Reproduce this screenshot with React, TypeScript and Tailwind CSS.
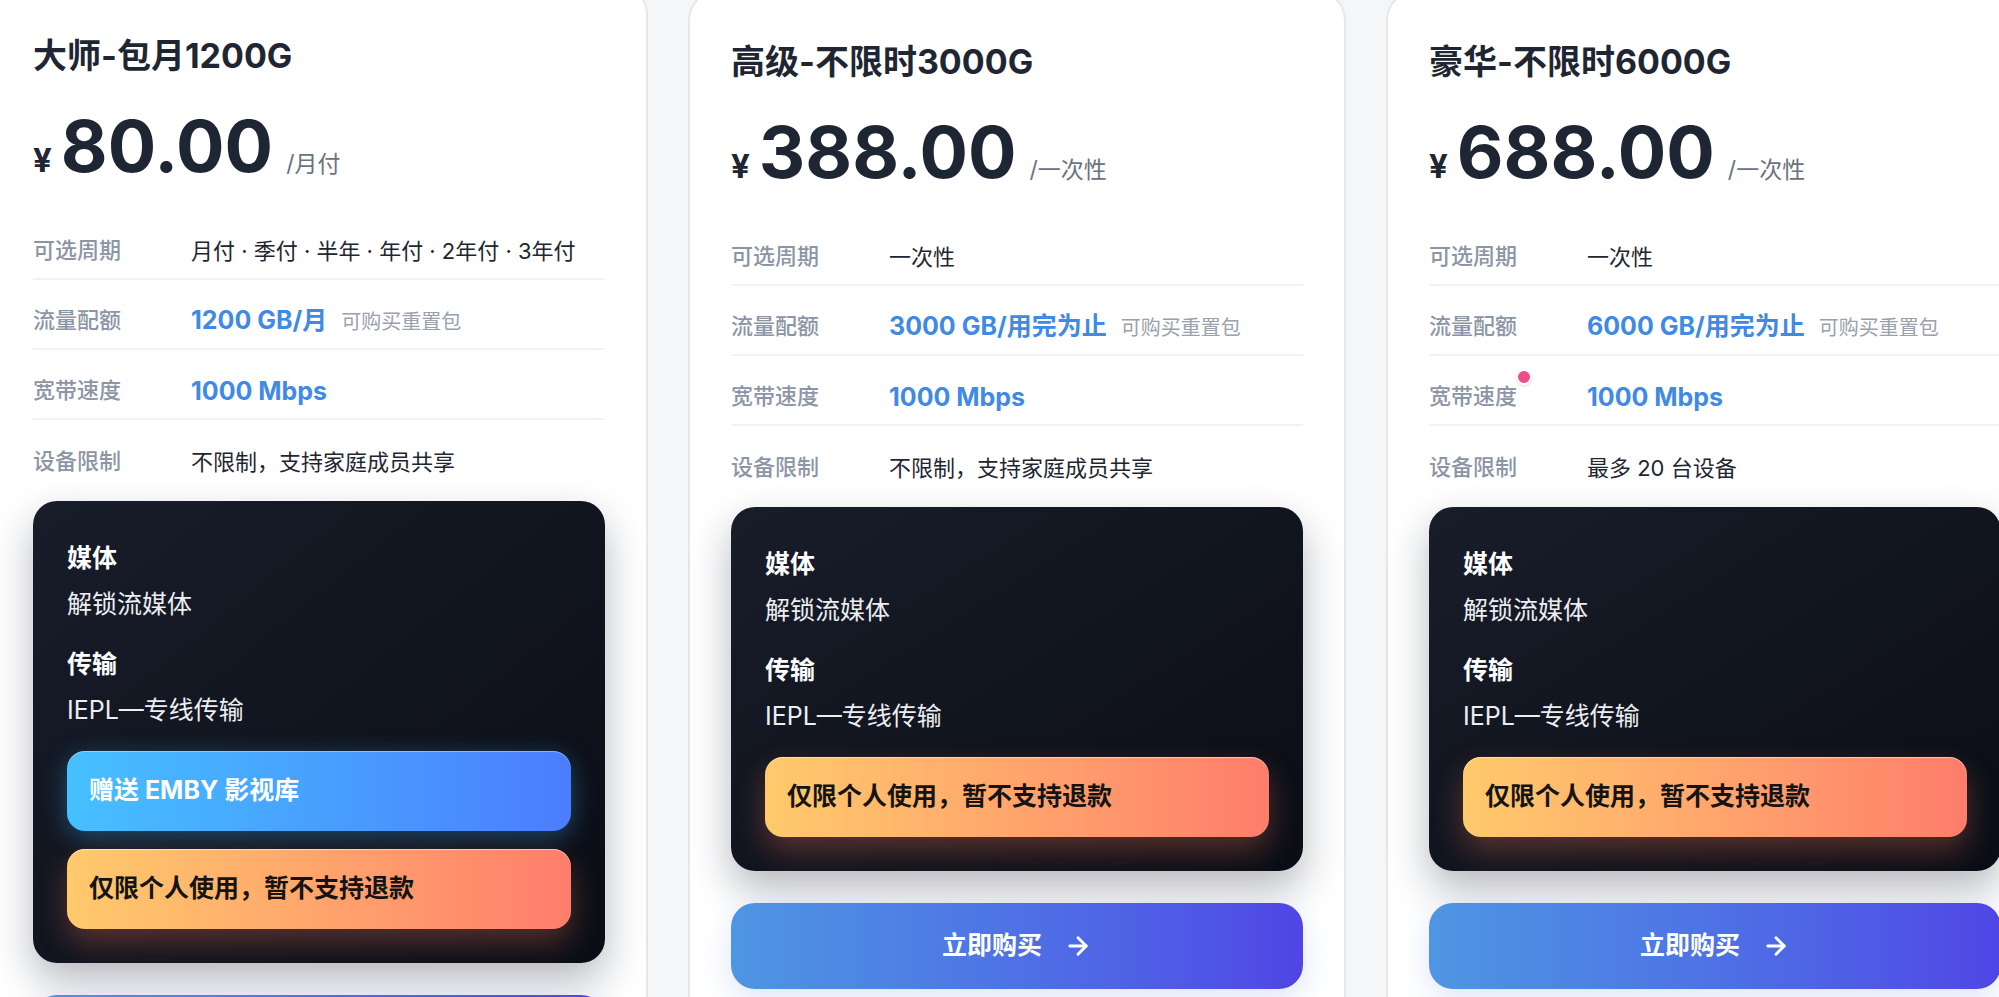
import { ArrowRight } from "lucide-react";

type Plan = {
  title: string;
  price: string;
  unit: string;
  cycle: string;
  traffic: string;
  device: string;
  emby?: boolean;
  lifted?: boolean;
  dot?: boolean;
};

const plans: Plan[] = [
  {
    title: "大师-包月1200G",
    price: "80.00",
    unit: "/月付",
    cycle: "月付 · 季付 · 半年 · 年付 · 2年付 · 3年付",
    traffic: "1200 GB/月",
    device: "不限制，支持家庭成员共享",
    emby: true,
    lifted: true,
  },
  {
    title: "高级-不限时3000G",
    price: "388.00",
    unit: "/一次性",
    cycle: "一次性",
    traffic: "3000 GB/用完为止",
    device: "不限制，支持家庭成员共享",
  },
  {
    title: "豪华-不限时6000G",
    price: "688.00",
    unit: "/一次性",
    cycle: "一次性",
    traffic: "6000 GB/用完为止",
    device: "最多 20 台设备",
    dot: true,
  },
];

function Row({
  label,
  children,
  dot,
}: {
  label: string;
  children: React.ReactNode;
  dot?: boolean;
}) {
  return (
    <div className="flex h-[70px] items-center border-b-2 border-[#f1f2f5] pt-[14px] leading-[24px] last:border-b-0">
      <div className="w-[158px] shrink-0">
        <span className="relative text-[22px] font-medium text-[#8c95a6]">
          {label}
          {dot && (
            <span className="absolute left-full top-[-14px] -ml-[1px] h-4 w-4 rounded-full border-2 border-white bg-[#ee4d87] shadow-[0_1px_3px_rgba(0,0,0,0.15)]" />
          )}
        </span>
      </div>
      <div className="flex items-baseline text-[22px] text-[#1f2633]">{children}</div>
    </div>
  );
}

function PlanCard({ plan }: { plan: Plan }) {
  return (
    <div
      className={`w-[658px] shrink-0 rounded-[32px] border-2 border-[#e5e7eb] bg-white px-[41px] pt-[49px] pb-[43px] ${
        plan.lifted ? "mt-[-17px]" : "mt-[-11px]"
      }`}
    >
      <h2 className="text-[34px] leading-[44px] font-bold text-[#1f2633]">{plan.title}</h2>

      <div className="mt-[32px] flex items-baseline leading-none text-[#1f2633]">
        <span className="mr-[9px] text-[33px] font-bold">¥</span>
        <span className="text-[72px] font-bold">{plan.price}</span>
        <span className="ml-[13px] text-[23px] text-[#6b7280]">{plan.unit}</span>
      </div>

      <div className="mt-[28px]">
        <Row label="可选周期">{plan.cycle}</Row>
        <Row label="流量配额">
          <span className="text-[25px] font-bold text-[#3f8ae4]">{plan.traffic}</span>
          <span className="ml-[14px] text-[20px] text-[#9aa1ad]">可购买重置包</span>
        </Row>
        <Row label="宽带速度" dot={plan.dot}>
          <span className="text-[25px] font-bold text-[#3f8ae4]">1000 Mbps</span>
        </Row>
        <Row label="设备限制">{plan.device}</Row>
      </div>

      {/* feature box */}
      <div className="mt-[11px] rounded-[24px] bg-linear-to-br from-[#181d2a] to-[#0a0d15] px-[34px] pt-[39px] pb-[34px] shadow-[0_18px_40px_rgba(15,23,42,0.3)] ring-1 ring-white/5">
        <div className="text-[25px] leading-[36px] font-bold text-white">媒体</div>
        <div className="mt-[10px] text-[25px] leading-[36px] text-[#eceef2]">解锁流媒体</div>
        <div className="mt-[24px] text-[25px] leading-[36px] font-bold text-white">传输</div>
        <div className="mt-[10px] text-[25px] leading-[36px] text-[#eceef2]">IEPL—专线传输</div>

        <div className="mt-[23px] flex flex-col gap-[18px]">
          {plan.emby && (
            <div className="flex h-[80px] items-center rounded-[18px] bg-linear-to-r from-[#46c0ff] to-[#4b7dff] px-[22px] text-[25px] font-bold text-white shadow-[inset_0_1px_0_rgba(255,255,255,0.35),0_6px_24px_rgba(70,180,255,0.35)]">
              赠送 EMBY 影视库
            </div>
          )}
          <div className="flex h-[80px] items-center rounded-[18px] bg-linear-to-r from-[#ffca6c] to-[#ff7d6b] px-[22px] text-[25px] font-bold text-[#141414] shadow-[inset_0_1px_0_rgba(255,255,255,0.5),0_14px_30px_rgba(255,120,90,0.3)]">
            仅限个人使用，暂不支持退款
          </div>
        </div>
      </div>

      <button className="mt-[32px] flex h-[86px] w-full items-center justify-center gap-[22px] rounded-[24px] bg-linear-to-r from-[#4e96e3] to-[#4f45e5] text-[25px] font-bold text-white shadow-[0_10px_30px_rgba(79,110,229,0.18)]">
        立即购买
        <ArrowRight size={28} strokeWidth={2.5} />
      </button>
    </div>
  );
}

export default function App() {
  return (
    <div className="h-[997px] overflow-hidden bg-[#f5f6f8] font-[Inter,'Noto_Sans_CJK_SC',sans-serif]">
      <div className="ml-[-10px] flex items-start gap-[40px]">
        {plans.map((plan) => (
          <PlanCard key={plan.title} plan={plan} />
        ))}
      </div>
    </div>
  );
}
